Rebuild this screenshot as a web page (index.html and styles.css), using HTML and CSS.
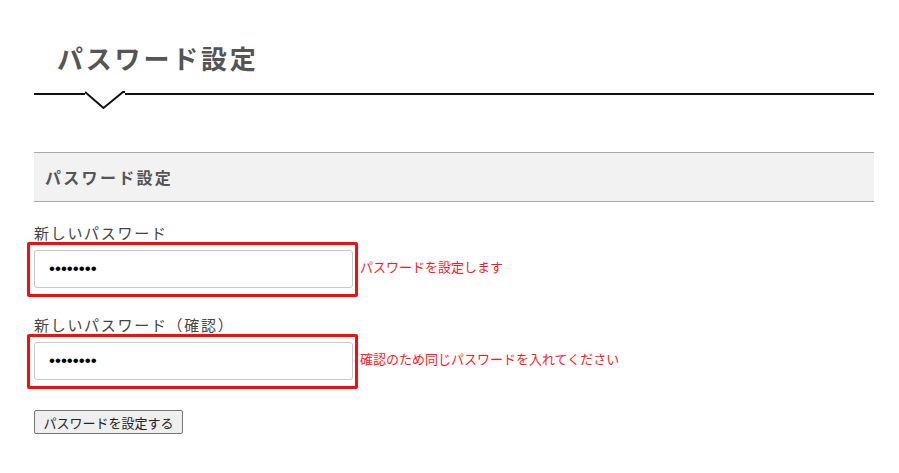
FILE: index.html
```html
<!DOCTYPE html>
<html lang="ja">
<head>
<meta charset="utf-8">
<title>パスワード設定</title>
<link rel="stylesheet" href="styles.css">
</head>
<body>
<div class="page">
  <h1 class="page-title">パスワード設定
    <svg class="notch" width="40" height="20" viewBox="0 0 40 20" aria-hidden="true">
      <rect x="0" y="0" width="40" height="4" fill="#fff"/>
      <polyline points="0,1 18.5,17 38,1 40,1" fill="none" stroke="#111" stroke-width="2"/>
    </svg>
  </h1>
  <h2 class="section-head">パスワード設定</h2>
  <form class="form">
    <div class="field">
      <label class="field-label" for="pw1">新しいパスワード</label>
      <div class="field-row">
        <div class="field-box"><input id="pw1" class="field-input" type="password" value="12345678"></div>
        <span class="field-note">パスワードを設定します</span>
      </div>
    </div>
    <div class="field field-second">
      <label class="field-label" for="pw2">新しいパスワード（確認）</label>
      <div class="field-row">
        <div class="field-box"><input id="pw2" class="field-input" type="password" value="12345678"></div>
        <span class="field-note">確認のため同じパスワードを入れてください</span>
      </div>
    </div>
    <button type="button" class="submit">パスワードを設定する</button>
  </form>
</div>
</body>
</html>
```

FILE: styles.css
```css
html, body {
  margin: 0;
  padding: 0;
  background: #fff;
}
body {
  font-family: "Noto Sans CJK JP", "Noto Sans", sans-serif;
  color: #444;
}
.page {
  width: 840px;
  margin-left: 34px;
}
.page-title {
  position: relative;
  margin: 0;
  padding: 40px 0 17px 23px;
  font-size: 26px;
  line-height: 36px;
  font-weight: 700;
  letter-spacing: 2.8px;
  color: #555;
  border-bottom: 2px solid #111;
}
.notch {
  position: absolute;
  left: 51px;
  bottom: -18px;
  display: block;
}
.section-head {
  margin: 57px 0 0;
  height: 48px;
  box-sizing: content-box;
  padding: 0 0 0 11px;
  display: flex;
  align-items: center;
  background: #f2f2f2;
  border-top: 1px solid #a9a9a9;
  border-bottom: 1px solid #a9a9a9;
  font-size: 16px;
  font-weight: 700;
  letter-spacing: 2.3px;
  color: #555;
}
.form {
  display: flex;
  flex-direction: column;
  align-items: flex-start;
}
.field {
  margin-top: 22px;
}
.field-second {
  margin-top: 19px;
}
.field-label {
  display: block;
  font-size: 15px;
  line-height: 18px;
  letter-spacing: 1.7px;
  color: #444;
}
.field-row {
  display: flex;
  align-items: center;
}
.field-box {
  margin-left: -7px;
  border: 3px solid #ff0a0a;
  border-radius: 2px;
  padding: 5px 2px 6px 4px;
}
.field-input {
  display: block;
  box-sizing: border-box;
  width: 319px;
  height: 38px;
  margin: 0;
  padding: 0 14px;
  border: 1px solid #c8c8c8;
  border-radius: 3px;
  font-family: "Liberation Sans", sans-serif;
  font-size: 17px;
  color: #000;
  background: #fff;
}
.field-note {
  margin-left: 2px;
  margin-top: -6px;
  font-size: 13px;
  color: #ff1a1a;
  white-space: nowrap;
}
.submit {
  margin-top: 21px;
  box-sizing: border-box;
  width: 149px;
  height: 24px;
  padding: 0 6px;
  font-family: "Noto Sans CJK JP", sans-serif;
  font-size: 13px;
  color: #222;
  background: #efefef;
  border: 1px solid #767676;
  border-radius: 2px;
}
```
